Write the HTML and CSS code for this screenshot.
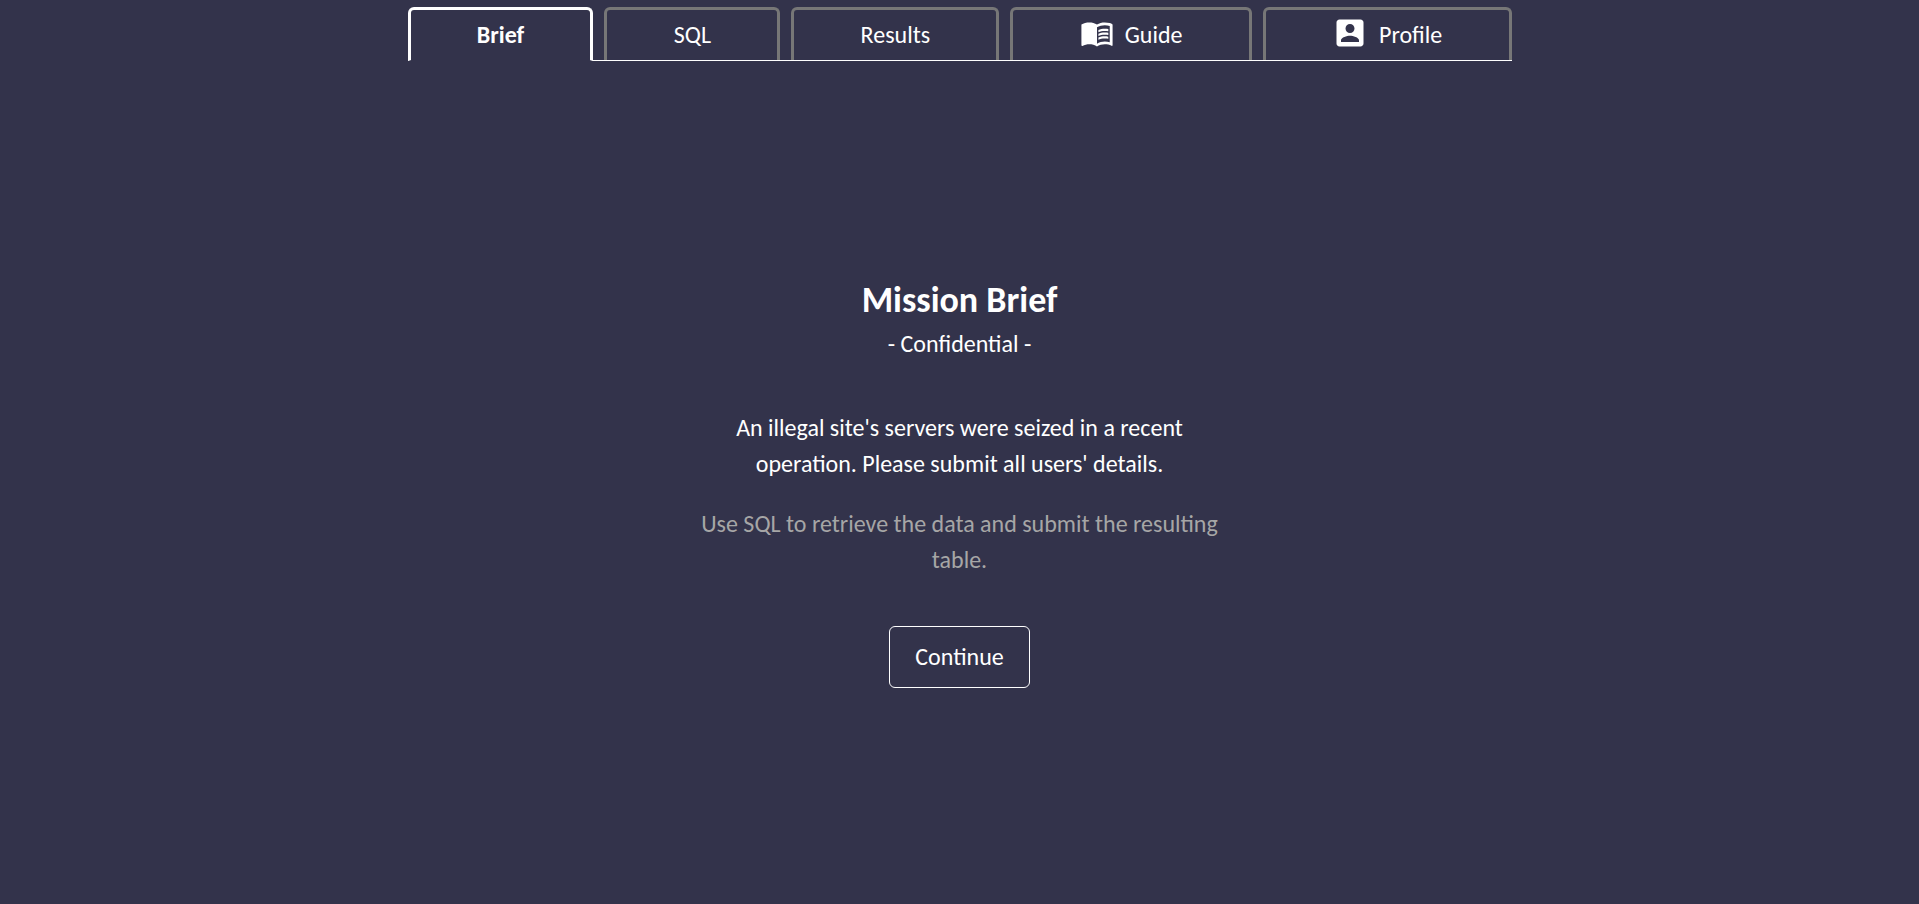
FILE: index.html
```html
<!DOCTYPE html>
<html lang="en">
<head>
<meta charset="utf-8">
<meta name="viewport" content="width=device-width, initial-scale=1">
<title>Mission Brief</title>
<link rel="stylesheet" href="styles.css">
</head>
<body>
<nav class="tabs" aria-label="Sections">
  <button class="tab tab-active" type="button" aria-current="page">Brief</button>
  <button class="tab" type="button">SQL</button>
  <button class="tab" type="button">Results</button>
  <button class="tab" type="button">
    <svg class="icon icon-guide" viewBox="0 0 24 24" aria-hidden="true"><path d="M21 5c-1.11-.35-2.33-.5-3.5-.5-1.95 0-4.05.4-5.5 1.5-1.45-1.1-3.55-1.5-5.5-1.5S2.45 4.9 1 6v14.65c0 .25.25.5.5.5.1 0 .15-.05.25-.05C3.1 20.45 5.05 20 6.5 20c1.95 0 4.05.4 5.5 1.5 1.35-.85 3.8-1.5 5.5-1.5 1.65 0 3.35.3 4.75 1.05.1.05.15.05.25.05.25 0 .5-.25.5-.5V6c-.6-.45-1.25-.75-2-1zm0 13.5c-1.1-.35-2.3-.5-3.5-.5-1.7 0-4.15.65-5.5 1.5V8c1.35-.85 3.8-1.5 5.5-1.5 1.2 0 2.4.15 3.5.5v11.5z"/><path d="M17.5 10.5c.88 0 1.73.09 2.5.26V9.24c-.79-.15-1.64-.24-2.5-.24-1.7 0-3.24.29-4.5.83v1.66c1.13-.64 2.7-.99 4.5-.99zM13 12.49v1.66c1.13-.64 2.7-.99 4.5-.99.88 0 1.73.09 2.5.26V11.9c-.79-.15-1.64-.24-2.5-.24-1.7 0-3.24.3-4.5.83zM17.5 14.33c-1.7 0-3.24.29-4.5.83v1.66c1.13-.64 2.7-.99 4.5-.99.88 0 1.73.09 2.5.26v-1.52c-.79-.16-1.64-.24-2.5-.24z"/></svg>
    Guide
  </button>
  <button class="tab" type="button">
    <svg class="icon" viewBox="0 0 24 24" aria-hidden="true"><path d="M3 5v14c0 1.1.89 2 2 2h14c1.1 0 2-.9 2-2V5c0-1.1-.9-2-2-2H5c-1.11 0-2 .9-2 2zm12 4c0 1.66-1.34 3-3 3s-3-1.34-3-3 1.34-3 3-3 3 1.34 3 3zm-9 8c0-2 4-3.1 6-3.1s6 1.100 6 3.100v1H6v-1z"/></svg>
    Profile
  </button>
</nav>
<main class="brief">
  <h1 class="title">Mission Brief</h1>
  <p class="subtitle">- Confidential -</p>
  <p class="mission">An illegal site's servers were seized in a recent operation. Please submit all users' details.</p>
  <p class="hint">Use SQL to retrieve the data and submit the resulting table.</p>
  <button class="continue" type="button">Continue</button>
</main>
</body>
</html>
```
FILE: styles.css
```css
* {
  box-sizing: border-box;
}

body {
  margin: 0;
  min-height: 100vh;
  display: flex;
  flex-direction: column;
  align-items: center;
  background: #33334b;
  color: #fff;
  font-family: Calibri, Carlito, Lato, sans-serif;
  font-size: 24px;
  line-height: 36px;
}

button {
  font: inherit;
  color: inherit;
  background: transparent;
  cursor: pointer;
}

.tabs {
  display: flex;
  gap: 11px;
  width: 100%;
  max-width: 1104px;
  padding-top: 7px;
  border-bottom: 1px solid #fff;
}

.tab {
  display: flex;
  flex: 1 1 auto;
  align-items: center;
  justify-content: center;
  gap: 11px;
  height: 53px;
  padding: 0 64px 1px;
  border: 3px solid #777;
  border-bottom: 0;
  border-radius: 6px 6px 0 0;
}

.tab-active {
  height: 54px;
  margin-bottom: -1px;
  border-color: #fff;
  border-bottom: 1px solid #33334b;
  font-weight: 700;
}

.icon {
  flex: none;
  width: 36px;
  height: 36px;
  margin-bottom: 3px;
  fill: currentColor;
}

.icon-guide {
  width: 34px;
  height: 34px;
}

.brief {
  flex: 1;
  display: flex;
  flex-direction: column;
  align-items: center;
  justify-content: center;
  width: 100%;
  max-width: 528px;
  text-align: center;
}

.title {
  margin: 0;
  font-size: 36px;
  line-height: 44px;
}

.subtitle {
  margin: 4px 0 48px;
}

.mission,
.hint {
  margin: 0 0 24px;
}

.hint {
  margin-bottom: 48px;
  color: #a6a6a6;
}

.continue {
  padding: 12px 25px;
  border: 1px solid #fff;
  border-radius: 6px;
}
```
